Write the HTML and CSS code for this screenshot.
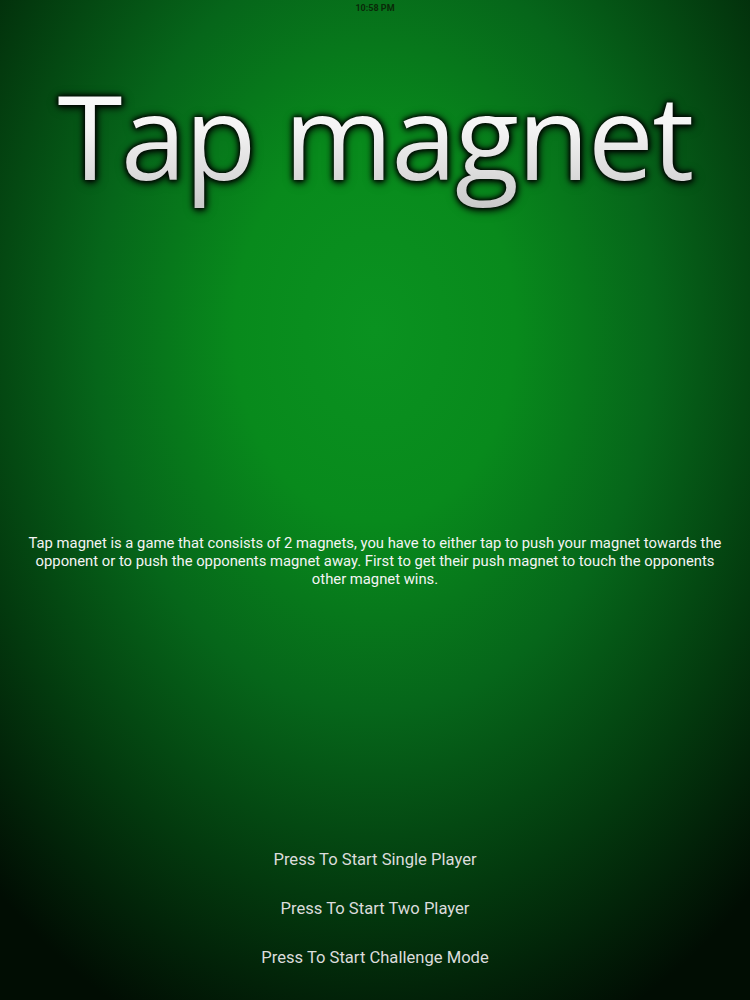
FILE: index.html
```html
<!DOCTYPE html>
<html>
<head>
<meta charset="utf-8">
<link rel="stylesheet" href="styles.css">
</head>
<body>
<div class="screen">
  <div class="status">10:58 PM</div>
  <h1 class="title">Tap magnet</h1>
  <p class="desc">Tap magnet is a game that consists of 2 magnets, you have to either tap to push your magnet towards the opponent or to push the opponents magnet away. First to get their push magnet to touch the opponents other magnet wins.</p>
  <div class="menu">
    <div class="btn">Press To Start Single Player</div>
    <div class="btn">Press To Start Two Player</div>
    <div class="btn">Press To Start Challenge Mode</div>
  </div>
</div>
</body>
</html>
```
FILE: styles.css
```css
html, body {
  margin: 0;
  padding: 0;
  background: #000;
}
.screen {
  width: 750px;
  height: 1000px;
  overflow: hidden;
  display: flex;
  flex-direction: column;
  align-items: center;
  background: radial-gradient(ellipse 560px 760px at 375px 330px, #0a9220 0%, #088a1c 25%, #06661a 50%, #033a0e 75%, #010d03 100%);
  font-family: Roboto, "Noto Sans", sans-serif;
}
.status {
  margin-top: 2px;
  font-size: 9px;
  font-weight: bold;
  color: #0a2a08;
  height: 12px;
  line-height: 12px;
}
.title {
  margin: 46px 0 0 0;
  font-family: "Open Sans", sans-serif;
  font-weight: 400;
  font-size: 118px;
  letter-spacing: -1.8px;
  line-height: 150px;
  height: 150px;
  color: #f2f2f2;
  background: linear-gradient(to bottom, #ffffff 0%, #f4f4f4 45%, #c8c8c8 100%);
  -webkit-background-clip: text;
  background-clip: text;
  -webkit-text-fill-color: transparent;
  filter: drop-shadow(0 0 2px #000) drop-shadow(0 0 3px rgba(0,0,0,0.8)) drop-shadow(1px 2px 3px rgba(0,0,0,0.6));
}
.desc {
  margin: 324px 0 0 0;
  width: 700px;
  text-align: center;
  color: #f4f4f4;
  font-size: 14.8px;
  line-height: 18px;
}
.menu {
  margin-top: 262px;
  display: flex;
  flex-direction: column;
  align-items: center;
  gap: 29px;
}
.btn {
  color: #dcdcdc;
  font-size: 16.6px;
  line-height: 20px;
}
```
